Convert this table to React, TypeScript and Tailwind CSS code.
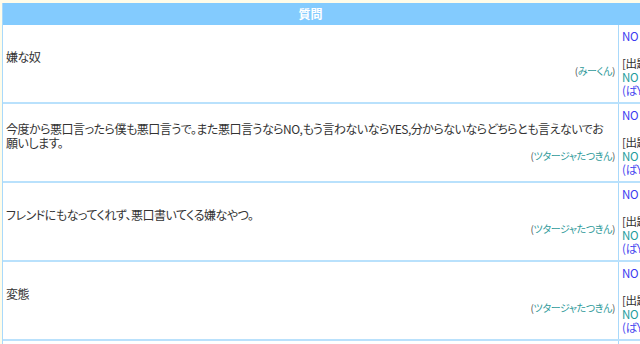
import React from "react";

type Row = {
  question: React.ReactNode;
  author: string;
};

const rows: Row[] = [
  { question: "嫌な奴", author: "みーくん" },
  {
    question: (
      <>
        今度から悪口言ったら僕も悪口言うで。また悪口言うならNO,もう言わないならYES,分からないならどちらとも言えないでお
        <br />
        願いします。
      </>
    ),
    author: "ツタージャたつきん",
  },
  { question: "フレンドにもなってくれず、悪口書いてくる嫌なやつ。", author: "ツタージャたつきん" },
  { question: "変態", author: "ツタージャたつきん" },
  { question: "うざい", author: "ツタージャたつきん" },
];

function AnswerCell() {
  return (
    <div className="border-l border-[#a9d9fb] pl-[3px] pt-[5px] text-[11.5px] leading-[13.5px] tracking-[-0.4px] whitespace-nowrap">
      <div className="text-[#3a3af0]">NO</div>
      <div>&nbsp;</div>
      <div className="text-[#333]">[出題者の回答]</div>
      <div className="text-[#229c9c]">NO</div>
      <div className="text-[#4a4af0]">(ばYESかNOで)</div>
    </div>
  );
}

export default function App() {
  return (
    <div
      className="w-[640px] h-[344px] overflow-hidden bg-[#fffce9] pt-[3px] pl-[2px] text-[#333]"
      style={{ fontFamily: '"Noto Sans CJK JP", "Noto Sans", sans-serif', fontFeatureSettings: '"palt"' }}
    >
      <div className="w-[820px] border-l border-[#a9d9fb] bg-white">
        <div className="grid grid-cols-[615px_1fr] h-[22px] bg-[#83cbfe]">
          <div className="flex items-center justify-center text-[12px] font-bold text-white">質問</div>
          <div />
        </div>
        {rows.map((row, i) => (
          <div key={i} className="grid grid-cols-[615px_1fr] h-[79px] border-b-2 border-[#b9e1fc]">
            <div className="flex flex-col justify-center pl-[3px] pr-[3px] text-[12px] leading-[13.5px]">
              <div className="whitespace-nowrap tracking-[-0.5px]">{row.question}</div>
              <div className="text-right text-[10px] tracking-[-0.4px]">
                <span className="text-[#555]">(</span>
                <span className="text-[#2f9a9a]">{row.author}</span>
                <span className="text-[#555]">)</span>
              </div>
            </div>
            <AnswerCell />
          </div>
        ))}
      </div>
    </div>
  );
}
